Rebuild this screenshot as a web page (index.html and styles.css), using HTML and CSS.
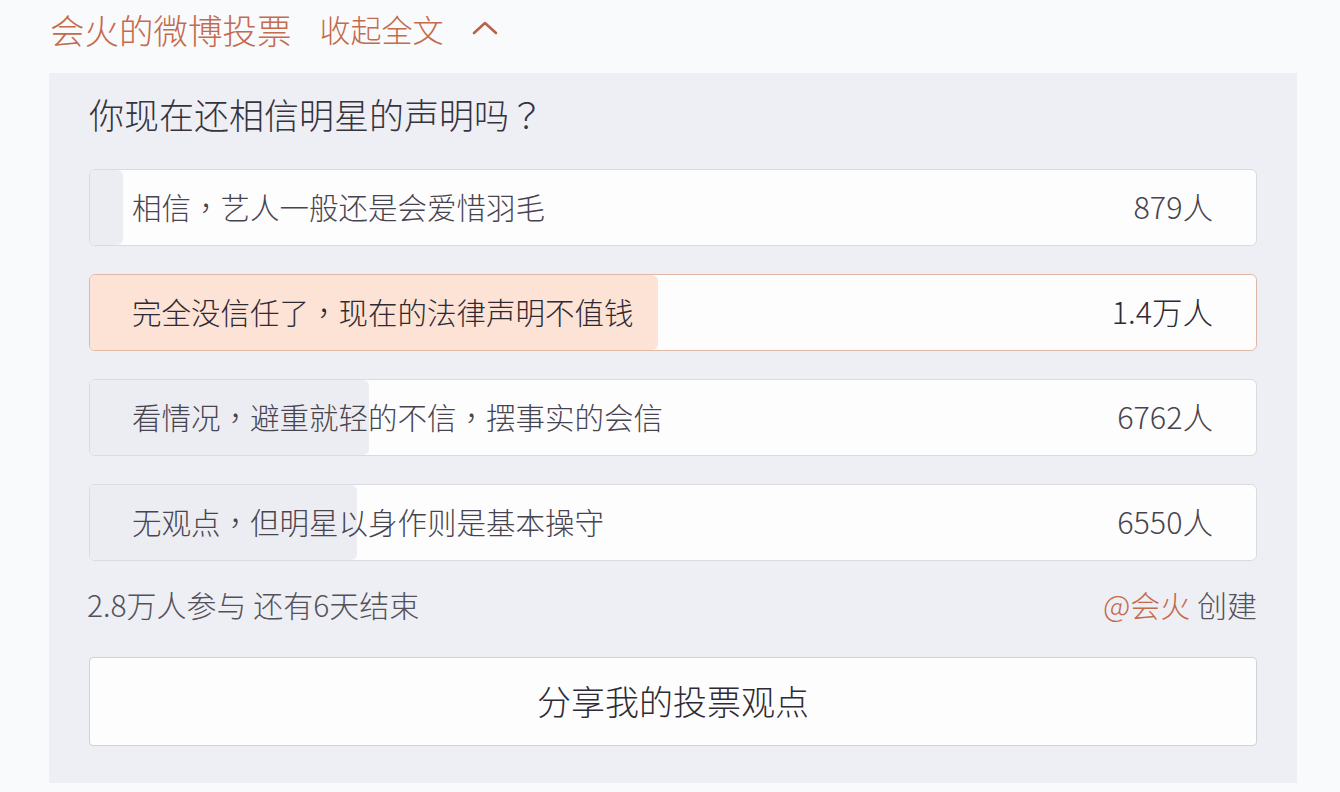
FILE: index.html
```html
<!DOCTYPE html>
<html lang="zh-CN">
<head>
<meta charset="utf-8">
<title>会火的微博投票</title>
<link rel="stylesheet" href="styles.css">
</head>
<body>
<div class="header">
  <span class="header-title">会火的微博投票</span>
  <span class="header-title toggle">收起全文</span>
  <svg class="chevron" width="26" height="16" viewBox="0 0 26 16"><path d="M2 13 L13 3 L24 13" fill="none" stroke="#b8624b" stroke-width="2.6" stroke-linecap="round" stroke-linejoin="round"/></svg>
</div>
<div class="card">
  <div class="question">你现在还相信明星的声明吗<span class="p" lang="zh-TW">？</span></div>
  <div class="options">
    <div class="option">
      <div class="fill" style="width:2.8%"></div>
      <span class="label">相信<span class="p" lang="zh-TW">，</span>艺人一般还是会爱惜羽毛</span>
      <span class="count">879人</span>
    </div>
    <div class="option selected">
      <div class="fill" style="width:48.7%"></div>
      <span class="label">完全没信任了<span class="p" lang="zh-TW">，</span>现在的法律声明不值钱</span>
      <span class="count">1.4万人</span>
    </div>
    <div class="option">
      <div class="fill" style="width:23.9%"></div>
      <span class="label">看情况<span class="p" lang="zh-TW">，</span>避重就轻的不信<span class="p" lang="zh-TW">，</span>摆事实的会信</span>
      <span class="count">6762人</span>
    </div>
    <div class="option">
      <div class="fill" style="width:22.9%"></div>
      <span class="label">无观点<span class="p" lang="zh-TW">，</span>但明星以身作则是基本操守</span>
      <span class="count">6550人</span>
    </div>
  </div>
  <div class="footer">
    <span class="stats">2.8万人参与 还有6天结束</span>
    <span class="creator"><span class="at">@会火</span> 创建</span>
  </div>
  <button class="share">分享我的投票观点</button>
</div>
</body>
</html>
```

FILE: styles.css
```css
* { box-sizing: border-box; }
html, body {
  margin: 0;
  padding: 0;
  background: #f9fafc;
}
body {
  font-family: "Noto Sans CJK SC", "Noto Sans CJK TC", "Noto Sans", sans-serif;
  font-weight: 300;
  color: #47434d;
  width: 1340px;
  height: 792px;
  overflow: hidden;
}
.p {
  font-family: "Noto Sans CJK TC", "Noto Sans CJK SC", sans-serif;
}
.header {
  height: 58px;
  padding-left: 50px;
  display: flex;
  align-items: center;
}
.header-title {
  font-size: 34.5px;
  line-height: 40px;
  color: #c46a4d;
}
.toggle {
  margin-left: 28px;
  font-size: 31px;
}
.chevron { margin: -3px 0 0 28px; }
.card {
  margin: 15px 0 0 49px;
  width: 1248px;
  height: 710px;
  background: #eeeff4;
  padding: 15px 40px 0 40px;
}
.question {
  font-size: 35px;
  line-height: 52px;
  color: #37333d;
  margin-bottom: 29px;
}
.options {
  display: flex;
  flex-direction: column;
  gap: 28px;
}
.option {
  position: relative;
  height: 77px;
  background: #fdfdfe;
  border: 1px solid #d9dbe1;
  border-radius: 6px;
  display: flex;
  align-items: center;
  justify-content: space-between;
  padding: 0 43px 4px 42px;
  overflow: hidden;
}
.fill {
  position: absolute;
  left: 0;
  top: 0;
  bottom: 0;
  background: #ecedf2;
  border-radius: 0 6px 6px 0;
}
.option.selected { border-color: #dfb9a6; }
.option.selected .fill { background: #fce3d6; }
.label, .count {
  position: relative;
  font-size: 29.5px;
  line-height: 40px;
  color: #48444f;
}
.count { font-size: 30.5px; }
.option.selected .label, .option.selected .count { color: #2e2a33; }
.footer {
  display: flex;
  justify-content: space-between;
  align-items: center;
  height: 40px;
  margin-top: 23px;
  font-size: 30px;
  color: #55515b;
}
.stats { margin-left: -2px; }
.at { color: #c46a4d; }
.share {
  display: block;
  width: 100%;
  height: 89px;
  margin-top: 33px;
  background: #fdfdfe;
  border: 1px solid #cfd2d9;
  border-radius: 4px;
  font-family: inherit;
  font-weight: 300;
  font-size: 34px;
  color: #2e2a33;
  padding-bottom: 4px;
  cursor: pointer;
}
```
